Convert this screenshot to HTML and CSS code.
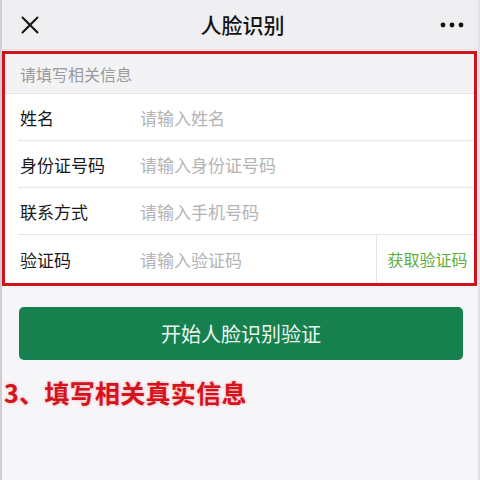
FILE: index.html
```html
<!DOCTYPE html>
<html lang="zh-CN">
<head>
<meta charset="utf-8">
<title>人脸识别</title>
<link rel="stylesheet" href="styles.css">
</head>
<body>
<div class="page">
  <header class="topbar">
    <span class="icon-close">
      <svg width="18" height="18" viewBox="0 0 18 18"><path d="M1.5 1.5 L16.5 16.5 M16.5 1.5 L1.5 16.5" stroke="#111" stroke-width="2" fill="none" stroke-linecap="round"/></svg>
    </span>
    <h1 class="title">人脸识别</h1>
    <span class="icon-more">
      <svg width="24" height="6" viewBox="0 0 24 6"><circle cx="3" cy="3" r="2.4" fill="#111"/><circle cx="12" cy="3" r="2.4" fill="#111"/><circle cx="21" cy="3" r="2.4" fill="#111"/></svg>
    </span>
  </header>

  <section class="form-box">
    <div class="form-head">请填写相关信息</div>
    <div class="row">
      <span class="label">姓名</span>
      <span class="ph">请输入姓名</span>
    </div>
    <div class="row">
      <span class="label">身份证号码</span>
      <span class="ph">请输入身份证号码</span>
    </div>
    <div class="row">
      <span class="label">联系方式</span>
      <span class="ph">请输入手机号码</span>
    </div>
    <div class="row row-last">
      <span class="label">验证码</span>
      <span class="ph">请输入验证码</span>
      <span class="get-code">获取验证码</span>
    </div>
  </section>

  <div class="btn-wrap">
    <div class="btn">开始人脸识别验证</div>
  </div>

  <p class="note">3、填写相关真实信息</p>
</div>
</body>
</html>
```

FILE: styles.css
```css
html, body {
  margin: 0;
  padding: 0;
}
body {
  background: #f6f6f8;
  font-family: "Noto Sans CJK SC", "Noto Sans", sans-serif;
}
.page {
  width: 480px;
  height: 480px;
  box-sizing: border-box;
  border-left: 2px solid #cfcfd2;
  border-right: 2px solid #e2e2e4;
  overflow: hidden;
}
.topbar {
  height: 50px;
  background: #efeff1;
  display: flex;
  align-items: center;
  justify-content: space-between;
  padding: 0 14px 0 19px;
  border-bottom: 1px solid #e2e2e6;
  box-sizing: border-box;
}
.icon-close, .icon-more {
  display: flex;
  align-items: center;
  width: 26px;
}
.icon-more { width: 26px; justify-content: flex-end; }
.title {
  margin: 0;
  font-size: 21px;
  font-weight: 500;
  color: #141414;
  line-height: 1;
}
.form-box {
  margin: 1px 1px 0 0;
  border: 3px solid #d0121b;
  background: #fff;
}
.form-head {
  height: 39px;
  background: #f3f3f5;
  border-bottom: 1px solid #e6e6e8;
  padding-left: 15px;
  display: flex;
  align-items: center;
  font-size: 16px;
  color: #9a9a9a;
}
.row {
  height: 47px;
  display: flex;
  align-items: center;
  margin-left: 13px;
  padding-left: 2px;
  border-bottom: 1px solid #e6e6e6;
  box-sizing: border-box;
}
.row-last {
  height: 48px;
  border-bottom: none;
  align-items: stretch;
}
.label {
  width: 120px;
  flex: none;
  font-size: 17px;
  color: #1a1a1a;
  display: flex;
  align-items: center;
}
.ph {
  flex: 1;
  font-size: 17px;
  color: #b3b3b3;
  display: flex;
  align-items: center;
}
.get-code {
  width: 98px;
  flex: none;
  border-left: 1px solid #e4e4e4;
  display: flex;
  align-items: center;
  justify-content: center;
  padding-left: 4px;
  box-sizing: border-box;
  font-size: 16px;
  color: #5fae3c;
}
.btn-wrap {
  padding: 21px 15px 0 17px;
}
.btn {
  height: 53px;
  border-radius: 5px;
  background: #17804f;
  color: #eaf6ef;
  font-size: 20px;
  display: flex;
  align-items: center;
  justify-content: center;
}
.note {
  margin: 16px 0 0 2px;
  font-size: 25px;
  font-weight: 700;
  color: #d3141d;
  line-height: 32px;
  text-shadow: 0 0 3px rgba(255, 120, 130, 0.7);
  letter-spacing: 0.3px;
}
```
